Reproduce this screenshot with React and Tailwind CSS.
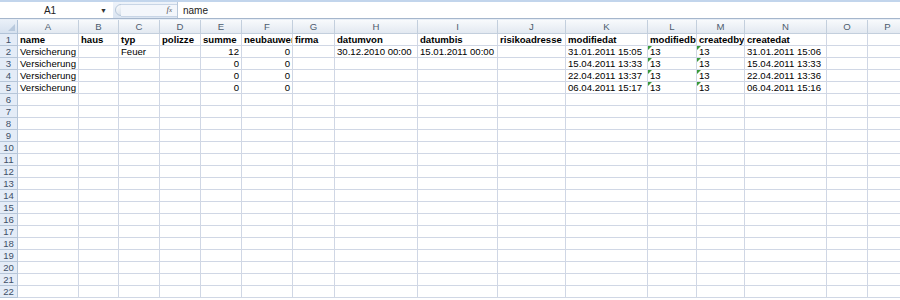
import React from 'react';

const COLS = [
  { l: 'A', w: 61 }, { l: 'B', w: 40 }, { l: 'C', w: 41 }, { l: 'D', w: 41 },
  { l: 'E', w: 41 }, { l: 'F', w: 51 }, { l: 'G', w: 42 }, { l: 'H', w: 83 },
  { l: 'I', w: 80 }, { l: 'J', w: 68 }, { l: 'K', w: 82 }, { l: 'L', w: 49 },
  { l: 'M', w: 48 }, { l: 'N', w: 82 }, { l: 'O', w: 41 }, { l: 'P', w: 40 },
];

const b = (v) => ({ v, bold: true });
const r = (v) => ({ v, right: true });
const t = (v) => ({ v, tri: true });

const DATA = {
  1: [b('name'), b('haus'), b('typ'), b('polizze'), b('summe'), b('neubauwert'), b('firma'), b('datumvon'), b('datumbis'), b('risikoadresse'), b('modifiedat'), b('modifiedby'), b('createdby'), b('createdat')],
  2: ['Versicherung', '', 'Feuer', '', r('12'), r('0'), '', '30.12.2010 00:00', '15.01.2011 00:00', '', '31.01.2011 15:05', t('13'), t('13'), '31.01.2011 15:06'],
  3: ['Versicherung', '', '', '', r('0'), r('0'), '', '', '', '', '15.04.2011 13:33', t('13'), t('13'), '15.04.2011 13:33'],
  4: ['Versicherung', '', '', '', r('0'), r('0'), '', '', '', '', '22.04.2011 13:37', t('13'), t('13'), '22.04.2011 13:36'],
  5: ['Versicherung', '', '', '', r('0'), r('0'), '', '', '', '', '06.04.2011 15:17', t('13'), t('13'), '06.04.2011 15:16'],
};

const font = { fontFamily: '"Liberation Sans", Arial, sans-serif' };

function Cell({ w, c }) {
  const cell = typeof c === 'string' ? { v: c } : c || { v: '' };
  return (
    <div
      className={`relative shrink-0 h-full border-r border-b border-[#d0d7e5] overflow-hidden whitespace-nowrap leading-[11px] px-[2px] ${cell.right ? 'text-right' : 'text-left'} ${cell.bold ? 'font-bold' : ''}`}
      style={{ width: w }}
    >
      {cell.tri && (
        <span className="absolute left-0 top-0 w-0 h-0 border-t-[4px] border-r-[4px] border-t-[#3a9a3a] border-r-transparent" />
      )}
      {cell.v}
    </div>
  );
}

export default function App() {
  const rows = Array.from({ length: 22 }, (_, i) => i + 1);
  return (
    <div className="w-[900px] h-[300px] overflow-hidden bg-white text-[9.6px] text-black" style={font}>
      {/* formula bar */}
      <div className="flex h-[19px] border-t-2 border-[#c2d5ec] border-b border-b-[#a5b6cc] bg-white">
        <div className="relative w-[113px] shrink-0 flex items-center bg-white">
          <span className="w-[100px] text-center text-[10px] text-[#222]">A1</span>
          <span className="text-[7px] text-[#333] leading-none">▼</span>
        </div>
        <div className="w-[64px] shrink-0 flex items-center bg-gradient-to-b from-[#eef3fa] to-[#dbe5f2]">
          <div className="ml-[2px] w-[12px] h-[12px] rounded-full border border-[#b7c7da] bg-gradient-to-br from-white to-[#c9d5e3]" />
          <div className="flex-1 h-[13px] -ml-[6px] border-y border-[#c8d5e6] bg-[#f3f6fb] flex items-center justify-end pr-[5px]">
            <span className="italic text-[9px] text-[#5b5b5b]" style={{ fontFamily: '"Liberation Serif", serif' }}>f<span className="text-[7px]">x</span></span>
          </div>
        </div>
        <div className="flex-1 flex items-center border-l border-[#b7c7da] pl-[5px] text-[10px] text-[#222]">name</div>
      </div>
      <div className="h-[1px] bg-[#e6edf6]" />

      {/* column headers */}
      <div className="flex h-[14px]">
        <div className="relative w-[18px] shrink-0 bg-gradient-to-b from-[#e9f0f8] to-[#d6e1ef] border-r border-b border-[#b1c3d8]">
          <span className="absolute right-[2px] bottom-[2px] w-0 h-0 border-l-[7px] border-t-[7px] border-l-transparent border-t-transparent border-r-0 border-b-0" style={{ borderBottom: '7px solid #b8c9dd', borderLeft: '7px solid transparent', borderTop: 0 }} />
        </div>
        {COLS.map((col) => (
          <div
            key={col.l}
            className="shrink-0 text-center leading-[13px] text-[9.6px] text-[#4d5c6e] bg-gradient-to-b from-[#f8fafc] to-[#e3e9f1] border-r border-b border-[#c3cfdd]"
            style={{ width: col.w }}
          >
            {col.l}
          </div>
        ))}
      </div>

      {/* rows */}
      {rows.map((n) => (
        <div key={n} className="flex h-[12px]">
          <div className="w-[18px] shrink-0 text-center leading-[11px] text-[9.6px] text-[#3f5068] bg-[#e4ecf7] border-r border-b border-[#b6c6d9]">
            {n}
          </div>
          {COLS.map((col, i) => (
            <Cell key={col.l} w={col.w} c={(DATA[n] || [])[i]} />
          ))}
        </div>
      ))}
    </div>
  );
}
